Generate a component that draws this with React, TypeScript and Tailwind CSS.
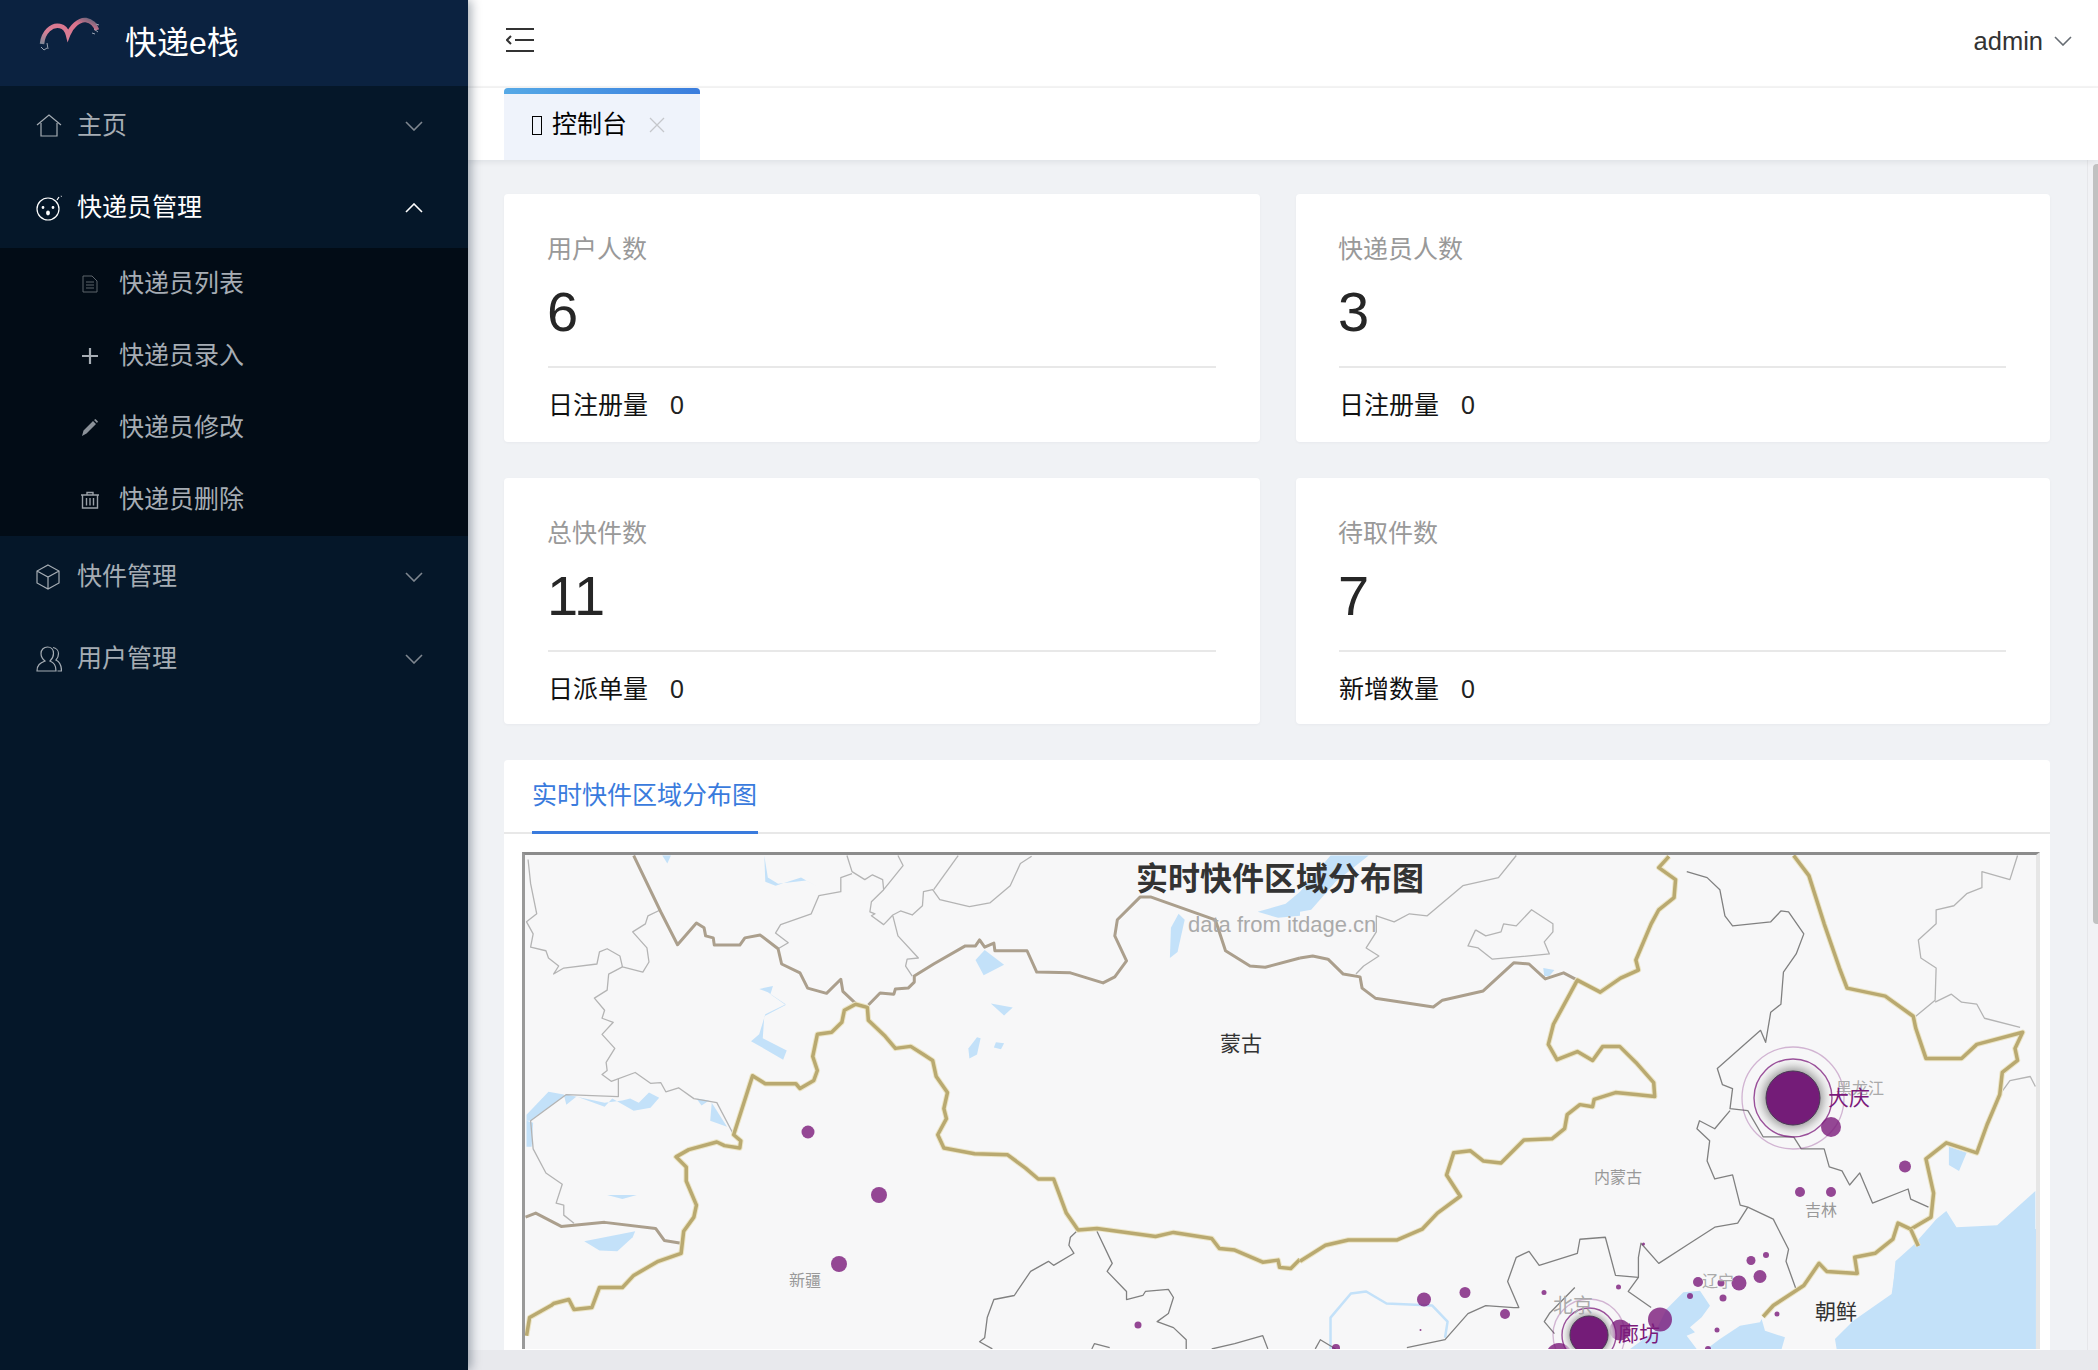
import { ReactNode } from "react";

const stats = [
  { title: "用户人数", value: "6", foot: "日注册量", box: "h-[248px] pl-[44px]" },
  { title: "快递员人数", value: "3", foot: "日注册量", box: "h-[248px] pl-[43px]" },
  { title: "总快件数", value: "11", foot: "日派单量", box: "h-[246px] pl-[44px]" },
  { title: "待取件数", value: "7", foot: "新增数量", box: "h-[246px] pl-[43px]" },
];

// map traces, in the coordinates of the left half
const westBorders = [
  "262,290 315,430 348,512 385,458 400,470 403,490 418,495 420,513 470,513 480,495 510,488 545,522 552,560 588,582 603,620 640,633 668,598 672,628 697,658",
  "722,662 745,632 772,635 775,622 800,620 812,605 812,590 850,560 912,515 932,515 940,500 950,518 968,508 970,527 1033,527 1052,580 1118,582 1182,607 1205,592 1228,552 1205,490 1210,450 1255,393 1275,393 1402,450 1422,527 1470,565 1500,568 1568,545",
  "50,1190 70,1180 120,1213 205,1203 305,1218 322,1248 355,1255",
];
const westChina =
  "52,1485 58,1440 100,1410 105,1405 135,1395 145,1420 180,1415 195,1365 240,1365 262,1335 310,1300 355,1280 360,1225 380,1190 385,1160 365,1100 365,1065 345,1040 370,1022 425,1003 440,1012 470,1018 472,1000 458,985 495,838 520,858 580,858 588,870 615,850 622,825 613,790 622,735 650,730 670,705 675,675 697,660 720,668 722,700 755,740 775,770 805,765 830,785 848,800 855,840 877,880 870,920 875,945 858,985 870,1018 930,1032 995,1035 1030,1068 1055,1095 1085,1095 1110,1180 1133,1222 1170,1218 1285,1238 1320,1228 1395,1243 1410,1268 1440,1272 1495,1302 1525,1297 1528,1315 1550,1318 1568,1295";
const westLines = [
  "55,300 60,360 72,435 52,455 65,485 60,518 90,527 95,545 115,565 105,585 125,570 190,560 195,530 210,522 235,540 240,567 280,580 292,555 288,520 260,480 285,460 290,440 315,425",
  "240,567 213,585 210,625 185,645 205,675 200,695 222,705 200,735 225,770 208,805 210,825 200,835 218,852 265,830 295,857 315,855 325,878 350,868 380,895 425,905 458,985",
  "232,845 232,890 130,885 60,950 65,1020 90,1080 122,1108 110,1155 125,1160 125,1185 145,1205",
  "680,290 690,330 715,350 730,338 750,350 752,375 790,315 780,290",
  "752,375 728,405 725,430 735,435 728,440 752,462 770,438 785,428 808,438 828,415 830,380 848,375 862,400 920,417 960,408 1000,365 1020,310 1042,292",
  "850,375 898,290",
  "690,335 668,345 668,380 625,390 610,435 550,462 540,483 565,507 545,522",
  "770,440 780,490 820,545 798,548 795,565 808,590",
];
const westProvinces = [
  "1133,1222 1118,1240 1115,1260 1125,1280 1085,1310 1075,1300 1040,1325 1008,1385 968,1395 955,1440 950,1490 940,1500 965,1518",
  "1170,1225 1200,1305 1190,1325 1228,1375 1228,1395 1260,1385 1265,1375 1310,1370 1320,1390 1310,1430 1288,1450 1320,1465 1345,1495 1345,1518",
  "1160,1518 1165,1505 1195,1515",
  "1395,1518 1440,1505 1495,1485 1505,1518",
];
const westWater = [
  "318,290 335,290 328,310",
  "518,290 520,355 540,365 590,345 622,368 600,352 545,360 525,345",
  "508,622 525,630 560,660 520,685 508,735 492,752 555,798 562,775 515,745 518,690 560,662 530,635 535,615",
  "950,525 988,562 948,588 932,550",
  "962,658 1005,668 988,688",
  "935,742 942,745 935,785 920,795 918,770",
  "972,755 988,757 982,772 968,768",
  "52,935 95,878 125,885 130,910 150,890 205,915 220,895 262,925 295,918 312,893 292,880 272,905 255,895 240,900 205,905 130,885 60,950 52,950",
  "52,950 65,955 62,1015 52,1015",
  "415,905 440,955 445,965 412,950",
  "385,895 410,900 395,912",
  "210,1135 268,1135 240,1145",
  "165,1250 265,1225 260,1240 230,1275 195,1273",
  "1330,435 1342,450 1328,530 1313,545 1315,470",
  "1485,430 1540,410 1568,380 1568,440 1525,445",
];

// and of the right half
const eastBorders = ["0,545 25,540 55,548 85,585 118,592 122,620 148,645 262,667 280,650 360,627 420,557 450,560 482,597 518,582 545,600"];
const eastChina = [
  "0,1300 50,1260 95,1247 190,1247 240,1220 270,1180 315,1138 288,1085 302,1030 335,1025 360,1050 395,1055 440,998 495,995 520,970 525,935 550,910 575,915 578,897 620,880 660,885 697,890 695,855 660,805 628,765 595,765 575,800 545,778 505,798 488,760 498,710 545,600 590,630 630,595 665,575 660,550 690,460 705,425 735,395 738,350 705,320 725,292",
  "970,290 1000,340 1030,460 1060,570 1075,620 1150,640 1205,690 1210,720 1230,795 1300,795 1330,760 1420,730 1405,770 1410,800 1380,830 1375,885 1350,960 1330,1030 1270,1005 1230,1045 1245,1130 1240,1190 1200,1220 1175,1205 1165,1245 1130,1280 1090,1290 1095,1330 1035,1325 1020,1305 990,1360 930,1410 910,1438",
  "1200,1220 1215,1262",
];
const eastLines = [
  "425,290 390,345 320,365 250,440 215,435 185,455 150,440 150,480 130,520 155,540 125,565 110,585",
  "345,475 330,515 350,520 378,548 490,535 480,505 497,480 497,460 455,425 425,465 400,460 395,480 365,490 345,475",
  "1410,290 1395,350 1340,330 1340,370 1310,385 1285,415 1250,425 1250,460 1215,500 1220,545 1250,570 1248,650 1210,690",
  "1248,655 1280,635 1300,655 1330,660 1345,695 1415,718",
  "1375,885 1395,850 1435,840 1445,865",
];
const eastProvinces = [
  "760,330 800,345 825,375 835,440 850,465 925,455 945,428 960,430 990,485 975,535 950,580 945,660 925,680 915,755 905,725 860,775 820,820 830,860 850,870 845,920 880,925 910,990 970,990 985,1020 1030,1020 1040,1065 1065,1075 1080,1110 1100,1080 1125,1155 1195,1120 1200,1145 1235,1165",
  "845,925 815,970 785,950 780,970 805,1000 800,1050 815,1095 850,1085 865,1160 880,1165 930,1195 940,1220 960,1270 955,1300 975,1370 930,1410",
  "880,1165 860,1205 815,1215 760,1260 705,1305 670,1255 665,1290 665,1340 620,1335 600,1240 550,1245 545,1280 470,1310 450,1275 425,1290 408,1350 430,1415 420,1415 365,1410 330,1430 285,1495 210,1515",
  "665,1340 645,1375 690,1415",
  "540,1365 490,1430 480,1450 500,1480",
  "70,1518 40,1495 30,1518",
];
const eastWater = [
  "0,380 60,290 135,290 70,355 22,425 0,430",
  "478,570 500,575 490,590 480,590",
  "1275,1015 1310,1030 1295,1075 1275,1060",
  "1445,1125 1370,1210 1290,1215 1270,1175 1250,1195 1240,1210 1205,1260 1170,1300 1165,1370 1445,1370",
];
const seas = [
  "1245,0 1195,50 1130,95 1115,195 1000,275 945,330 950,360 1548,360 1548,0 1430,0 1370,15 1350,0",
  "560,360 600,330 660,290 720,280 725,270 735,305 795,325 785,360",
  "330,360 385,320 410,300 440,240 490,190 540,185 570,230 545,265 510,295 525,310 500,320 530,360",
];

// x, y, r in page pixels
const dots = [
  [808, 1133, 6.5], [879, 1196, 8], [839, 1265, 8], [1138, 1326, 3.5], [1831, 1128, 10], [1905, 1167.5, 6],
  [1800, 1193, 5], [1831, 1193, 5], [1760, 1277.5, 6.5], [1751, 1261.5, 4.5], [1766, 1256, 3], [1739, 1284, 7.5],
  [1698, 1283, 5], [1721, 1284, 3.5], [1690, 1297, 3], [1723, 1299, 3.5], [1660, 1320.5, 12], [1620, 1331, 10.5],
  [1559, 1357, 13], [1424, 1300.5, 7], [1465, 1293.5, 5.5], [1505, 1315, 5], [1544, 1293.5, 2.5], [1618.5, 1288, 2.5],
  [1777, 1315, 2.5], [1717, 1331, 2.5], [1420.5, 1331, 1], [1336, 1349, 4], [1643.5, 1245, 1.5], [1708, 1350, 3],
];

const labels = [
  { t: "蒙古", x: 1220, y: 1046, s: 21, c: "#333333" },
  { t: "新疆", x: 789, y: 1283, s: 16, c: "#999999" },
  { t: "内蒙古", x: 1594, y: 1180, s: 16, c: "#999999" },
  { t: "吉林", x: 1805, y: 1213, s: 16, c: "#999999" },
  { t: "黑龙江", x: 1836, y: 1091, s: 16, c: "#aaaaaa" },
  { t: "辽宁", x: 1702, y: 1284, s: 16, c: "#aaaaaa" },
  { t: "北京", x: 1553, y: 1309, s: 20, c: "#aaaaaa" },
  { t: "朝鲜", x: 1815, y: 1314, s: 21, c: "#333333" },
  { t: "大庆", x: 1828, y: 1100, s: 21, c: "#7b1a7b" },
  { t: "廊坊", x: 1618, y: 1336, s: 21, c: "#7b1a7b" },
];

function Chevron({ up, className }: { up?: boolean; className: string }) {
  return (
    <svg viewBox="0 0 18 10" fill="none" stroke="currentColor" strokeWidth="1.6" className={`w-[18px] h-[10px] ${className}`}>
      <path d={up ? "M1 9 L9 1 L17 9" : "M1 1 L9 9 L17 1"} />
    </svg>
  );
}

function TopIcon({ children }: { children: ReactNode }) {
  return (
    <svg viewBox="0 0 26 26" fill="none" stroke="currentColor" strokeWidth="1.2" className="w-[26px] h-[26px] shrink-0">
      {children}
    </svg>
  );
}

function SubIcon({ children }: { children: ReactNode }) {
  return <svg viewBox="0 0 20 20" className="w-[20px] h-[20px] shrink-0">{children}</svg>;
}

function MenuRow({ icon, label, open, low }: { icon: ReactNode; label: string; open?: boolean; low?: boolean }) {
  return (
    <div className={`flex items-center h-[82px] pl-[36px] pr-[45px] ${low ? "pt-[2px]" : ""} ${open ? "text-white" : "text-[#a6adb4]"}`}>
      {icon}
      <span className="ml-[15px] text-[25px] flex-1">{label}</span>
      <Chevron up={open} className={open ? "text-white" : "text-[#7f8790]"} />
    </div>
  );
}

function SubRow({ icon, label }: { icon: ReactNode; label: string }) {
  return (
    <div className="flex items-center h-[72px] pl-[80px] text-[#a6adb4]">
      {icon}
      <span className="ml-[19px] text-[25px]">{label}</span>
    </div>
  );
}

function Sidebar() {
  return (
    <aside className="w-[468px] shrink-0 bg-[#051729] z-10 shadow-[3px_0_10px_rgba(0,21,41,0.35)]">
      <div className="flex items-center h-[86px] bg-[#0b2240] pl-[38px]">
        <svg viewBox="0 0 62 36" fill="none" className="w-[62px] h-[36px] -mt-[18px] shrink-0">
          <defs>
            <linearGradient id="logoArc" x1="0" y1="1" x2="1" y2="0">
              <stop offset="0" stopColor="#7f8796" />
              <stop offset="0.3" stopColor="#d97f96" />
              <stop offset="0.75" stopColor="#d9728c" />
              <stop offset="1" stopColor="#5d6478" />
            </linearGradient>
          </defs>
          <path d="M4 28 C5 16 14 8 22 10 C27 11 29 15 30 19 C33 11 41 3 48 4 C53 5 57 8 59 14" stroke="url(#logoArc)" strokeWidth="4.5" />
          <path d="M3 31 l3 3 M6 34 l3 -2 M9 27 l1 6 M56 13 l4 3 M58 8 l3 1 M54 17 l3 1" stroke="#9aa3b2" strokeWidth="1" />
        </svg>
        <span className="ml-[25px] text-[32px] text-white -mt-[1px]">快递e栈</span>
      </div>
      <div className="-mt-[2px]">
        <MenuRow
          low
          label="主页"
          icon={
            <TopIcon>
              <path d="M1 12 L13 2 L25 12 M5 10 V23 H21 V10" />
            </TopIcon>
          }
        />
        <MenuRow
          open
          low
          label="快递员管理"
          icon={
            <TopIcon>
              <circle cx="12" cy="14" r="11" />
              <circle cx="7" cy="12.5" r="0.8" fill="currentColor" />
              <circle cx="17" cy="12.5" r="0.8" fill="currentColor" />
              <ellipse cx="12" cy="18" rx="1.3" ry="1.8" fill="currentColor" />
              <path d="M21 5 L23 2 M25 1.5 L25.5 1" />
            </TopIcon>
          }
        />
        <div className="bg-[#020c16]">
          <SubRow
            label="快递员列表"
            icon={
              <SubIcon>
                <path d="M3 2 H12 L17 7 V18 H3 Z M6 8 H14 M6 11 H14 M6 14 H14" fill="none" stroke="#5d646b" strokeWidth="1" />
              </SubIcon>
            }
          />
          <SubRow
            label="快递员录入"
            icon={
              <SubIcon>
                <path d="M10 2 V18 M2 10 H18" stroke="#a6adb4" strokeWidth="2.2" />
              </SubIcon>
            }
          />
          <SubRow
            label="快递员修改"
            icon={
              <SubIcon>
                <path d="M2 18 L3.5 12.5 L13 3 L16 6 L6.5 15.5 Z M14 2 L15.5 1 L18 3.5 L17 5 Z" fill="#8b9299" />
              </SubIcon>
            }
          />
          <SubRow
            label="快递员删除"
            icon={
              <SubIcon>
                <path d="M1 5 H19 M7 5 V2.5 H13 V5 M2.5 5 V18 H17.5 V5 M6.5 8 V15.5 M10 8 V15.5 M13.5 8 V15.5" fill="none" stroke="#9aa1a8" strokeWidth="1.4" />
              </SubIcon>
            }
          />
        </div>
        <MenuRow
          label="快件管理"
          icon={
            <TopIcon>
              <path d="M12 1 L23 7 V19 L12 25 L1 19 V7 Z M1 7 L12 13 L23 7 M12 13 V25" />
            </TopIcon>
          }
        />
        <MenuRow
          label="用户管理"
          icon={
            <TopIcon>
              <path d="M1 25 C1 19 4 17 9 15 C6.5 13 5 10 5 7.5 C5 3.5 8 1 11.5 1 C15 1 17.5 3.5 17.5 7.5 C17.5 10 16 13 14 15 C18 17 20 19 20 25 Z" />
              <path d="M17 1.5 C20 2 22.5 4.5 22.5 7.5 C22.5 10 21.5 12.5 20 14 C23 15.5 25.5 18.5 25.5 25 H21.5" />
            </TopIcon>
          }
        />
      </div>
    </aside>
  );
}

function Topbar() {
  return (
    <header className="flex items-center justify-between h-[88px] bg-white border-b-2 border-[#f5f5f5] pl-[38px] pr-[26px] shrink-0">
      <svg viewBox="0 0 28 26" fill="none" stroke="#333333" strokeWidth="2" className="w-[28px] h-[26px] -mt-[6px]">
        <path d="M0 2 H28 M9 13 H28 M0 24 H28" />
        <path d="M5 9 L1 13 L5 17" />
      </svg>
      <div className="flex items-center gap-[11px] text-[#333333] -mt-[4px]">
        <span className="text-[25.5px]">admin</span>
        <Chevron className="text-[#666c73]" />
      </div>
    </header>
  );
}

function TabsBar() {
  return (
    <div className="h-[72px] bg-white pl-[36px] shrink-0 z-[5] shadow-[0_2px_6px_rgba(0,21,41,0.08)]">
      <div className="w-[196px] h-full bg-[#eff3fb] rounded-t-[4px] overflow-hidden">
        <div className="h-[6px] bg-gradient-to-r from-[#56a9e6] to-[#3b7ddd]" />
        <div className="flex items-center h-[66px] pl-[28px] -mt-[2px]">
          <span className="w-[10px] h-[19px] border-[1.5px] border-black" />
          <span className="ml-[10px] text-[25px] text-black">控制台</span>
          <svg viewBox="0 0 16 16" fill="none" stroke="#c5c7cb" strokeWidth="1.3" className="w-[16px] h-[16px] ml-[22px]">
            <path d="M1 1 L15 15 M15 1 L1 15" />
          </svg>
        </div>
      </div>
    </div>
  );
}

function StatCard({ title, value, foot, box }: { title: string; value: string; foot: string; box: string }) {
  return (
    <div className={`bg-white rounded-[4px] pr-[44px] shadow-[0_1px_3px_rgba(0,21,41,0.04)] ${box}`}>
      <div className="pt-[38px] text-[25px] leading-[34px] text-[#999999] -ml-[1px]">{title}</div>
      <div className="mt-[13px] h-[66px] text-[56px] leading-[66px] text-[#262626] -ml-[1px]">{value}</div>
      <div className="mt-[21px] h-[2px] bg-[#e8e8e8]" />
      <div className="flex items-center mt-[20px] text-[25px] leading-[34px] text-[#111111]">
        <span>{foot}</span>
        <span className="ml-[22px] text-[#222222]">0</span>
      </div>
    </div>
  );
}

function Trace({ points, stroke, width, halo }: { points: string; stroke: string; width: number; halo?: string }) {
  return (
    <>
      {halo && (
        <polyline points={points} fill="none" stroke={halo} strokeWidth={width + 2} strokeLinejoin="round" vectorEffect="non-scaling-stroke" />
      )}
      <polyline points={points} fill="none" stroke={stroke} strokeWidth={width} strokeLinejoin="round" vectorEffect="non-scaling-stroke" />
    </>
  );
}

function Pulse({ x, y, r, ring, outer }: { x: number; y: number; r: number; ring: number; outer: number }) {
  return (
    <g>
      <circle cx={x} cy={y} r={outer} fill="none" stroke="#7b1a7b" strokeOpacity="0.3" strokeWidth="1.3" />
      <circle cx={x} cy={y} r={ring} fill="url(#pulseGlow)" stroke="#7b1a7b" strokeOpacity="0.75" strokeWidth="1.4" />
      <circle cx={x} cy={y} r={r + 1} fill="#741c78" stroke="#4a3a55" strokeWidth="1" />
    </g>
  );
}

function RegionMap() {
  return (
    <div className="w-[1518px] bg-[#f7f7f8] border-t-[3px] border-l-[3px] border-r-[4px] border-t-[#8c8c8c] border-l-[#999999] border-r-[#e6e6e6] overflow-hidden">
      <svg viewBox="525 856 1511 494" className="block w-[1511px] h-[494px] font-['Liberation_Sans','Noto_Sans_CJK_SC',sans-serif]">
        <defs>
          <radialGradient id="pulseGlow">
            <stop offset="0.6" stopColor="#8c8c8c" />
            <stop offset="0.85" stopColor="#d8d8d8" stopOpacity="0.8" />
            <stop offset="1" stopColor="#f0f0f0" stopOpacity="0.3" />
          </radialGradient>
        </defs>
        <g transform="translate(1520 1230) scale(0.3333)">
          {seas.map((p) => (
            <polygon key={p} points={p} fill="#c3e1f9" />
          ))}
        </g>
        <g transform="translate(500 740) scale(0.5102 0.4018)">
          {westWater.map((p) => (
            <polygon key={p} points={p} fill="#c3e1f9" />
          ))}
          {westLines.map((p) => (
            <Trace key={p} points={p} stroke="#b4b4b4" width={1.3} />
          ))}
          {westProvinces.map((p) => (
            <Trace key={p} points={p} stroke="#808080" width={1.3} />
          ))}
          {westBorders.map((p) => (
            <Trace key={p} points={p} stroke="#ab9f8d" width={3} />
          ))}
          <Trace points={westChina} stroke="#b9a970" width={3.5} halo="#ece5c6" />
        </g>
        <g transform="translate(1300 740) scale(0.5089 0.4018)">
          {eastWater.map((p) => (
            <polygon key={p} points={p} fill="#c3e1f9" />
          ))}
          <Trace points="60,1518 60,1440 100,1380 130,1375 170,1405 260,1410 290,1450 285,1490" stroke="#c3e1f9" width={2.5} />
          {eastLines.map((p) => (
            <Trace key={p} points={p} stroke="#b4b4b4" width={1.3} />
          ))}
          {eastProvinces.map((p) => (
            <Trace key={p} points={p} stroke="#808080" width={1.3} />
          ))}
          {eastBorders.map((p) => (
            <Trace key={p} points={p} stroke="#ab9f8d" width={3} />
          ))}
          {eastChina.map((p) => (
            <Trace key={p} points={p} stroke="#b9a970" width={3.5} halo="#ece5c6" />
          ))}
        </g>
        {dots.map(([x, y, r]) => (
          <circle key={`${x}-${y}`} cx={x} cy={y} r={r} fill="#7b1a7b" fillOpacity="0.8" />
        ))}
        <Pulse x={1793} y={1099} r={26} ring={39} outer={51} />
        <Pulse x={1589} y={1336} r={18} ring={27} outer={36} />
        <text x={1280} y={883} textAnchor="middle" dominantBaseline="middle" fontSize="32" fontWeight="700" fill="#333333">
          实时快件区域分布图
        </text>
        <text x={1188} y={927} dominantBaseline="middle" fontSize="22" fill="#aaaaaa">
          data from itdage.cn
        </text>
        {labels.map((l) => (
          <text key={l.t} x={l.x} y={l.y} dominantBaseline="middle" fontSize={l.s} fill={l.c}>
            {l.t}
          </text>
        ))}
      </svg>
    </div>
  );
}

export default function App() {
  return (
    <div className="flex w-[2098px] h-[1370px] overflow-hidden bg-[#f0f2f5] font-['Liberation_Sans','Noto_Sans_CJK_SC',sans-serif]">
      <Sidebar />
      <main className="flex flex-col flex-1 min-w-0">
        <Topbar />
        <TabsBar />
        <div className="relative flex-1 min-h-0 overflow-hidden pl-[36px] pr-[48px] pt-[34px]">
          <div className="grid grid-cols-[756px_754px] gap-[36px]">
            {stats.map((s) => (
              <StatCard key={s.title} {...s} />
            ))}
          </div>
          <section className="mt-[36px] bg-white rounded-t-[4px] pb-[20px]">
            <div className="h-[74px] border-b-2 border-[#e8e8e8] pl-[28px]">
              <div className="inline-flex items-center w-[226px] h-[74px] border-b-[3px] border-[#3a7bdd] text-[25px] text-[#3a7bdd] whitespace-nowrap">
                实时快件区域分布图
              </div>
            </div>
            <div className="pt-[18px] pl-[18px]">
              <RegionMap />
            </div>
          </section>
          <div className="absolute top-0 right-0 bottom-0 w-[11px] bg-[#f1f2f5] border-l border-[#e6e7ea]">
            <div className="absolute top-[4px] right-0 w-[5px] h-[760px] rounded-l-[4px] bg-[#c1c1c1]" />
          </div>
        </div>
        <div className="h-[20px] bg-[#e8e9ed] shrink-0 z-[1]" />
      </main>
    </div>
  );
}
